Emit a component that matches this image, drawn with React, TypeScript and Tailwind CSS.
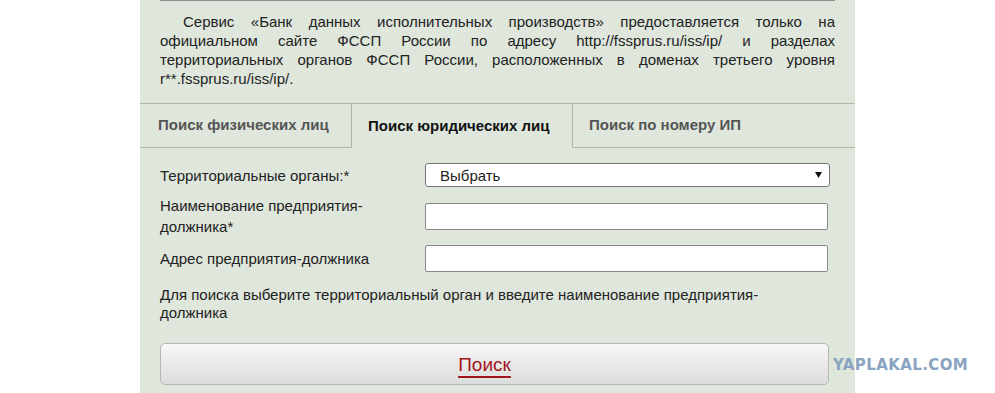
export default function App() {
  const tabs = [
    { label: "Поиск физических лиц", active: false },
    { label: "Поиск юридических лиц", active: true },
    { label: "Поиск по номеру ИП", active: false },
  ]

  return (
    <div className="relative h-[393px] w-full overflow-hidden bg-white font-['Liberation_Sans',Arial,sans-serif]">
      <div className="mx-auto h-full w-[715px] bg-[#dfe6dc]">
        <div className="mx-5 border-t border-[#8f8f8f]" />

        <p className="mx-5 mt-[11px] text-justify indent-[23px] text-[15px] leading-[19px] text-[#222]">
          Сервис «Банк данных исполнительных производств» предоставляется только на
          официальном сайте ФССП России по адресу http://fssprus.ru/iss/ip/ и разделах
          территориальных органов ФССП России, расположенных в доменах третьего уровня
          r**.fssprus.ru/iss/ip/.
        </p>

        <div className="mt-[15px] flex h-[45px] border-t border-[#adb8a9]">
          <div className="flex w-[211px] items-center border-b border-[#adb8a9] pl-[18px] text-[15px] font-bold text-[#555]">
            {tabs[0].label}
          </div>
          <div className="flex w-[222px] items-center border-x border-[#adb8a9] pl-4 text-[15px] font-bold text-[#111]">
            {tabs[1].label}
          </div>
          <div className="flex flex-1 items-center border-b border-[#adb8a9] pl-4 text-[15px] font-bold text-[#555]">
            {tabs[2].label}
          </div>
        </div>

        <div className="flex flex-col gap-2 px-5 pt-[15px] text-[15px] leading-[21px] text-[#222]">
          <div className="flex items-center">
            <div className="w-[265px]">Территориальные органы:*</div>
            <div className="flex h-6 w-[405px] items-center justify-between rounded-[3px] border border-[#777] bg-white pl-[14px] pr-[7px]">
              <span>Выбрать</span>
              <svg width="7" height="6" viewBox="0 0 7 6">
                <path d="M0 0h7L3.5 6z" fill="#111" />
              </svg>
            </div>
          </div>

          <div className="flex items-center">
            <div className="w-[265px]">
              Наименование предприятия-
              <br />
              должника*
            </div>
            <div className="h-[27px] w-[403px] rounded-[2px] border border-[#888] bg-white" />
          </div>

          <div className="flex items-center">
            <div className="w-[265px]">Адрес предприятия-должника</div>
            <div className="h-[27px] w-[403px] rounded-[2px] border border-[#888] bg-white" />
          </div>

          <p className="mt-[6px] w-[640px] leading-[18px]">
            Для поиска выберите территориальный орган и введите наименование предприятия-
            <br />
            должника
          </p>

          <button className="mt-[13px] flex h-[42px] w-[669px] items-center justify-center rounded-[5px] border border-[#b5b5b5] bg-gradient-to-b from-[#f7f7f7] to-[#dcdcdc] pr-5 text-[19px] text-[#a3141c] underline decoration-[#a3141c] decoration-2 underline-offset-[5px]">
            Поиск
          </button>
        </div>
      </div>

      <div className="absolute left-[833px] top-[354px] font-['DejaVu_Sans',sans-serif] text-[15px] font-black tracking-[0.4px] text-[#8aa3c0]">
        YAPLAKAL.COM
      </div>
    </div>
  )
}
